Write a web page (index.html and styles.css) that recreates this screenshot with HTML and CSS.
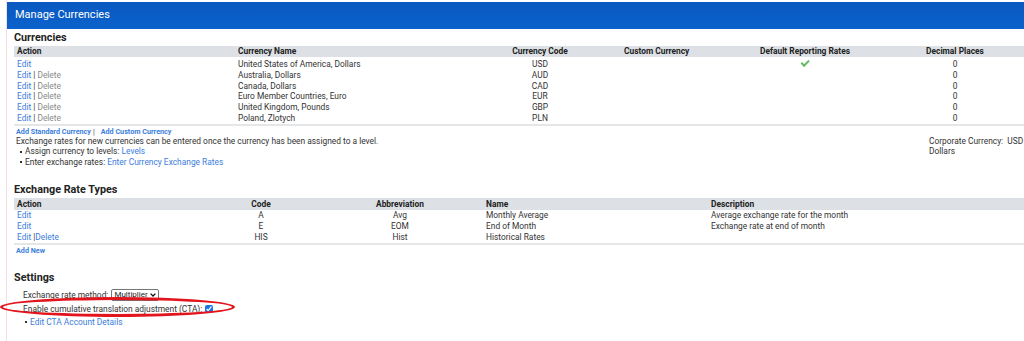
FILE: index.html
```html
<!DOCTYPE html>
<html lang="en">
<head>
    <meta charset="UTF-8">
    <title>Manage Currencies</title>
    <link rel="stylesheet" href="styles.css">
</head>
<body>
    <div class="page">
        <div class="titlebar">Manage Currencies</div>
        <div class="content">
            <h2 class="section-title">Currencies</h2>
            <table class="grid currencies">
                <colgroup>
                    <col class="c-action"><col class="c-name"><col class="c-code"><col class="c-custom"><col class="c-default"><col class="c-decimal"><col>
                </colgroup>
                <thead>
                    <tr>
                        <th>Action</th>
                        <th>Currency Name</th>
                        <th class="center">Currency Code</th>
                        <th>Custom Currency</th>
                        <th class="center">Default Reporting Rates</th>
                        <th class="center">Decimal Places</th>
                        <th></th>
                    </tr>
                </thead>
                <tbody>
                    <tr>
                        <td><a href="#">Edit</a></td>
                        <td>United States of America, Dollars</td>
                        <td class="center">USD</td>
                        <td></td>
                        <td class="center"><span class="check"></span></td>
                        <td class="center">0</td>
                        <td></td>
                    </tr>
                    <tr>
                        <td><a href="#">Edit</a> | <span class="muted">Delete</span></td>
                        <td>Australia, Dollars</td>
                        <td class="center">AUD</td>
                        <td></td><td></td>
                        <td class="center">0</td>
                        <td></td>
                    </tr>
                    <tr>
                        <td><a href="#">Edit</a> | <span class="muted">Delete</span></td>
                        <td>Canada, Dollars</td>
                        <td class="center">CAD</td>
                        <td></td><td></td>
                        <td class="center">0</td>
                        <td></td>
                    </tr>
                    <tr>
                        <td><a href="#">Edit</a> | <span class="muted">Delete</span></td>
                        <td>Euro Member Countries, Euro</td>
                        <td class="center">EUR</td>
                        <td></td><td></td>
                        <td class="center">0</td>
                        <td></td>
                    </tr>
                    <tr>
                        <td><a href="#">Edit</a> | <span class="muted">Delete</span></td>
                        <td>United Kingdom, Pounds</td>
                        <td class="center">GBP</td>
                        <td></td><td></td>
                        <td class="center">0</td>
                        <td></td>
                    </tr>
                    <tr>
                        <td><a href="#">Edit</a> | <span class="muted">Delete</span></td>
                        <td>Poland, Zlotych</td>
                        <td class="center">PLN</td>
                        <td></td><td></td>
                        <td class="center">0</td>
                        <td></td>
                    </tr>
                </tbody>
            </table>
            <div class="add-links">
                <a href="#">Add Standard Currency</a><span class="sep">|</span><a href="#">Add Custom Currency</a>
            </div>
            <div class="note-row">
                <div class="note">
                    <div>Exchange rates for new currencies can be entered once the currency has been assigned to a level.</div>
                    <ul class="bullets">
                        <li>Assign currency to levels: <a href="#">Levels</a></li>
                        <li>Enter exchange rates: <a href="#">Enter Currency Exchange Rates</a></li>
                    </ul>
                </div>
                <div class="corporate">Corporate Currency:&nbsp; USD<br>Dollars</div>
            </div>

            <h2 class="section-title rates-title">Exchange Rate Types</h2>
            <table class="grid rates">
                <colgroup>
                    <col class="r-action"><col class="r-code"><col class="r-abbr"><col class="r-name"><col>
                </colgroup>
                <thead>
                    <tr>
                        <th>Action</th>
                        <th class="center">Code</th>
                        <th class="center">Abbreviation</th>
                        <th class="pad-name">Name</th>
                        <th>Description</th>
                    </tr>
                </thead>
                <tbody>
                    <tr>
                        <td><a href="#">Edit</a></td>
                        <td class="center">A</td>
                        <td class="center">Avg</td>
                        <td class="pad-name">Monthly Average</td>
                        <td>Average exchange rate for the month</td>
                    </tr>
                    <tr>
                        <td><a href="#">Edit</a></td>
                        <td class="center">E</td>
                        <td class="center">EOM</td>
                        <td class="pad-name">End of Month</td>
                        <td>Exchange rate at end of month</td>
                    </tr>
                    <tr>
                        <td><a href="#">Edit</a> |<a href="#">Delete</a></td>
                        <td class="center">HIS</td>
                        <td class="center">Hist</td>
                        <td class="pad-name">Historical Rates</td>
                        <td></td>
                    </tr>
                </tbody>
            </table>
            <div class="add-links"><a href="#">Add New</a></div>

            <h2 class="section-title settings-title">Settings</h2>
            <div class="settings">
                <div class="setting">
                    Exchange rate method:
                    <span class="select-wrap">
                        <select class="method">
                            <option>Multiplier</option>
                        </select>
                        <svg class="chevron" width="6" height="4" viewBox="0 0 6 4">
                            <path d="M0.6 0.6 L3 3 L5.4 0.6" fill="none" stroke="#111" stroke-width="1.3"/>
                        </svg>
                    </span>
                </div>
                <div class="setting">
                    Enable cumulative translation adjustment (CTA):
                    <input type="checkbox" class="cta-box" checked>
                </div>
                <ul class="bullets">
                    <li><a href="#">Edit CTA Account Details</a></li>
                </ul>
                <div class="highlight"></div>
            </div>
        </div>
    </div>
</body>
</html>
```

FILE: styles.css
```css
body {
    margin: 0;
    background: #ffffff;
    font-family: Roboto, "Liberation Sans", Arial, sans-serif;
    font-size: 8.4px;
    color: #333333;
}

a {
    color: #3b7ddd;
    text-decoration: none;
}

.page {
    margin-left: 6px;
    padding-top: 2px;
    border-left: 1px solid #f3e1e1;
    min-height: 339px;
}

.titlebar {
    height: 27px;
    line-height: 26px;
    padding-left: 8px;
    background: linear-gradient(#0a58c0, #0b62cc);
    color: #ffffff;
    font-size: 11px;
}

.content {
    padding-left: 7px;
}

.section-title {
    margin: 0;
    height: 15px;
    line-height: 15px;
    padding-top: 1px;
    font-size: 10.8px;
    font-weight: bold;
    color: #222222;
}

/* tables */
.grid {
    width: 1010px;
    border-collapse: collapse;
    table-layout: fixed;
    margin-top: 1px;
    border-bottom: 2px solid #e4e6e8;
}

.grid th {
    background: #dde0e4;
    height: 12px;
    line-height: 12px;
    padding: 0 3px;
    text-align: left;
    font-weight: bold;
    color: #222222;
    white-space: nowrap;
}

.currencies th {
    height: 11px;
    line-height: 11px;
    border-bottom: 2px solid #ffffff;
}

.grid td {
    height: 10.8px;
    line-height: 10.8px;
    padding: 0 3px;
    white-space: nowrap;
}

.grid .center {
    text-align: center;
}

.muted {
    color: #8a8a8a;
}

.c-action { width: 221px; }
.c-name { width: 224px; }
.c-code { width: 162px; }
.c-custom { width: 80px; }
.c-default { width: 208px; }
.c-decimal { width: 92px; }

.r-action { width: 180px; }
.r-code { width: 134px; }
.r-abbr { width: 144px; }
.r-name { width: 236px; }

.grid .pad-name {
    padding-left: 14px;
}

.check {
    display: inline-block;
    width: 6px;
    height: 2.5px;
    border-left: 2px solid #62b95f;
    border-bottom: 2px solid #62b95f;
    transform: rotate(-45deg);
    margin-bottom: 3px;
}

.add-links {
    height: 9px;
    line-height: 9px;
    padding-top: 1px;
    padding-left: 2px;
    font-size: 7.2px;
    font-weight: bold;
}

.add-links .sep {
    color: #333333;
    font-weight: normal;
    margin: 0 6px 0 2px;
}

.note-row {
    display: flex;
    align-items: flex-start;
}

.note {
    flex: 1;
    line-height: 10.5px;
    padding-left: 2px;
}

.bullets {
    margin: 0;
    padding: 0 0 0 4px;
    list-style: none;
}

.bullets li::before {
    content: "";
    display: inline-block;
    width: 2px;
    height: 2px;
    background: #333333;
    margin: 0 3px 1px 0;
    vertical-align: middle;
}

.corporate {
    width: 95px;
    line-height: 10.5px;
}

.rates-title {
    margin-top: 14px;
}

.settings-title {
    margin-top: 14px;
}

.settings {
    position: relative;
    padding-left: 9px;
    padding-top: 3px;
}

.setting {
    height: 14px;
    line-height: 14px;
}

.select-wrap {
    position: relative;
    display: inline-block;
    vertical-align: middle;
    margin-left: 1px;
}

.method {
    display: block;
    appearance: none;
    -webkit-appearance: none;
    font-family: Roboto, "Liberation Sans", Arial, sans-serif;
    font-size: 8px;
    height: 12px;
    line-height: 10px;
    padding: 0 8px 0 2px;
    width: 48px;
    border: 1px solid #767676;
    border-radius: 2px;
    color: #222222;
    background: #ffffff;
}

.chevron {
    position: absolute;
    right: 3px;
    top: 4px;
}

.cta-box {
    width: 8px;
    height: 8px;
    margin: 0 0 0 1px;
    vertical-align: middle;
    accent-color: #1a73e8;
}

.settings .bullets {
    padding-left: 2px;
    line-height: 13px;
}

.highlight {
    position: absolute;
    left: -14px;
    top: 12px;
    width: 229px;
    height: 14px;
    border: 3px solid #e2141c;
    border-radius: 50%;
}
```
